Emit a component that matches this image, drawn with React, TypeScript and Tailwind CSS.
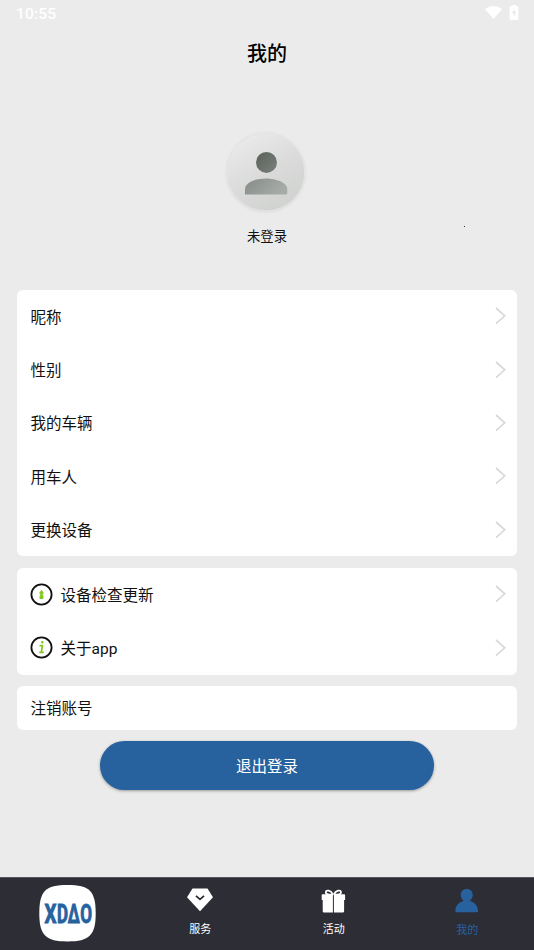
import React from 'react';

type RowProps = {
  label: string;
  icon?: React.ReactNode;
};

const profileRows = ['昵称', '性别', '我的车辆', '用车人', '更换设备'];

const logoLetters = [
  { char: 'X', x: 6.6, width: 12 },
  { char: 'D', x: 19, width: 11 },
  { char: 'Δ', x: 29.8, width: 12 },
  { char: 'O', x: 42.2, width: 11.8 },
];

function Chevron() {
  return (
    <svg className="h-[18px] w-[12px]" viewBox="0 0 12 18" fill="none" stroke="#d9d9d9" strokeWidth="1.7">
      <path d="M2 1 L10.8 8.8 L2 16.6" />
    </svg>
  );
}

function UpdateIcon() {
  return (
    <svg className="mr-2 -ml-px h-[23px] w-[23px]" viewBox="0 0 23 23" fill="none">
      <circle cx="11.5" cy="11.5" r="10.1" stroke="#111" strokeWidth="1.8" />
      <path d="M11.5 6.8 L14.2 10.6 H12.8 V12.4 H13.4 V16 H9.6 V12.4 H10.2 V10.6 H8.8 Z" fill="#86c91e" />
    </svg>
  );
}

function AboutIcon() {
  return (
    <svg className="mr-2 -ml-px h-[23px] w-[23px]" viewBox="0 0 23 23" fill="none">
      <circle cx="11.5" cy="11.5" r="10.1" stroke="#111" strokeWidth="1.8" />
      <circle cx="12.3" cy="6.2" r="1.2" fill="#86c91e" />
      <path d="M9.5 9.6 H12.4 L11.3 16.3 M9.2 16.3 H13.8" stroke="#86c91e" strokeWidth="1.7" />
    </svg>
  );
}

function Row({ label, icon }: RowProps) {
  return (
    <div className="flex h-[53.4px] items-center justify-between pr-[11px] pl-[13.5px]">
      <div className="flex items-center">
        {icon}
        <span className="pt-[3px]">{label}</span>
      </div>
      <Chevron />
    </div>
  );
}

function StatusBar() {
  return (
    <div className="flex h-[28px] items-center justify-between pr-[15px] pl-[16px] text-white">
      <span className="pt-[2px] font-[Roboto] text-[15.5px] leading-none font-medium tracking-[0.2px]">10:55</span>
      <div className="flex items-start gap-[7px] pb-[3px]">
        <svg className="mt-px h-[13px] w-[17px]" viewBox="0 0 17 13" fill="currentColor">
          <path d="M0 3 Q8.5 -3 17 3 L8.5 13 Z" />
        </svg>
        <svg className="h-[15px] w-[10px]" viewBox="0 0 10 15">
          <path d="M3 1 V0 H7 V1 H8 Q9.4 1 9.4 2.5 V13.5 Q9.4 15 8 15 H2 Q0.6 15 0.6 13.5 V2.5 Q0.6 1 2 1 Z" fill="currentColor" />
          <path d="M5.6 4 L3.2 8 H4.8 V11.4 L7 7.2 H5.6 Z" fill="#e4e4e4" />
        </svg>
      </div>
    </div>
  );
}

function Avatar() {
  return (
    <svg className="h-[88px] w-[88px]" viewBox="0 0 88 88">
      <defs>
        <linearGradient id="disc" x1="0.2" y1="0" x2="0.8" y2="1">
          <stop offset="0" stopColor="#ebebeb" />
          <stop offset="0.5" stopColor="#dadbda" />
          <stop offset="1" stopColor="#cfd1cf" />
        </linearGradient>
        <linearGradient id="head" x1="0" y1="0" x2="1" y2="1">
          <stop offset="0" stopColor="#59615b" />
          <stop offset="1" stopColor="#7b817c" />
        </linearGradient>
        <linearGradient id="body" x1="0" y1="0" x2="1" y2="0.4">
          <stop offset="0" stopColor="#858b86" />
          <stop offset="1" stopColor="#a6aba7" />
        </linearGradient>
        <filter id="soft" x="-10%" y="-10%" width="120%" height="120%">
          <feDropShadow dx="0" dy="0.5" stdDeviation="0.8" floodColor="#999" floodOpacity="0.3" />
        </filter>
      </defs>
      <circle cx="42.8" cy="44" r="39" fill="url(#disc)" stroke="#e5e5e5" strokeWidth="1" filter="url(#soft)" />
      <circle cx="43.5" cy="34.4" r="10.5" fill="url(#head)" />
      <path d="M22 66.5 V61 C22 54.5 33 50.4 43 50.4 C53 50.4 64.3 54.5 64.3 61 V65 Q64.3 66.5 63 66.5 Z" fill="url(#body)" />
    </svg>
  );
}

function Logo() {
  return (
    <svg className="h-[58px] w-[58px]" viewBox="0 0 58 58">
      <path
        d="M29.5 1 C51.5 1 57.7 7.2 57.7 29.2 C57.7 51.2 51.5 57.4 29.5 57.4 C7.5 57.4 1.3 51.2 1.3 29.2 C1.3 7.2 7.5 1 29.5 1 Z"
        fill="#fff"
      />
      <g
        transform="translate(0 38.5) scale(1 1.4)"
        className="font-[Roboto,sans-serif] text-[18.5px] font-bold"
        fill="#27629f"
        stroke="#27629f"
        strokeWidth="0.7"
      >
        {logoLetters.map(({ char, x, width }) => (
          <text key={char} x={x} y="0" textLength={width} lengthAdjust="spacingAndGlyphs">
            {char}
          </text>
        ))}
      </g>
    </svg>
  );
}

function BottomNav() {
  return (
    <nav className="grid h-[73px] grid-cols-4 border-t border-[#555560] bg-[#2d2d36] text-[11px] leading-[16px] text-white">
      <div className="flex justify-center pt-[6px]">
        <Logo />
      </div>
      <div className="flex flex-col items-center pt-[10px]">
        <svg className="h-[24px] w-[27px]" viewBox="0 0 27 24">
          <path d="M5.5 0.5 H20.5 L26 9.3 L13 23.3 L0 9.3 Z" fill="#fff" />
          <path d="M9 7.8 L13 11.4 L17 7.8" fill="none" stroke="#2d2d36" strokeWidth="1.8" />
        </svg>
        <span className="mt-[10px]">服务</span>
      </div>
      <div className="flex flex-col items-center pt-[11px]">
        <svg className="h-[24px] w-[25px]" viewBox="0 0 25 24">
          <path d="M12 5.5 C10 1 5 0.5 4.8 3.2 C4.7 5.5 8 5.6 12 5.6 M12.8 5.6 C14.8 1 19.8 0.5 20 3.2 C20.1 5.5 17 5.6 12.8 5.6" fill="none" stroke="#fff" strokeWidth="1.8" />
          <path d="M1.5 5.2 H11.9 V23.5 H3 Q1.7 23.5 1.7 22.2 V11 H0.7 V6 Q0.7 5.2 1.5 5.2 Z M12.9 5.2 H23.3 Q24.1 5.2 24.1 6 V11 H23.1 V22.2 Q23.1 23.5 21.8 23.5 H12.9 Z" fill="#fff" />
        </svg>
        <span className="mt-[9px]">活动</span>
      </div>
      <div className="flex flex-col items-center pt-[11px] text-[#27629f]">
        <svg className="h-[24px] w-[24px]" viewBox="0 0 24 24" fill="currentColor">
          <path d="M11.7 0 C8.2 0 5.7 2.4 5.7 5.8 C5.7 8.4 7 10.6 8.6 11.7 C4 13.2 0.4 17 0.4 21.5 V22.5 Q0.4 23.3 1.2 23.3 H22.2 Q23 23.3 23 22.5 V21.5 C23 17 19.4 13.2 14.8 11.7 C16.4 10.6 17.7 8.4 17.7 5.8 C17.7 2.4 15.2 0 11.7 0 Z" />
        </svg>
        <span className="mt-[10px]">我的</span>
      </div>
    </nav>
  );
}

export default function App() {
  return (
    <div className="flex h-[950px] w-[534px] flex-col overflow-hidden bg-[#ebebeb] font-[Roboto,'Noto_Sans_CJK_SC',sans-serif] text-[15.5px] leading-[22px] text-[#111]">
      <StatusBar />
      <h1 className="mt-[11px] text-center text-[20px] leading-[30px] font-medium text-black">我的</h1>

      <div className="mt-[59px] flex flex-col items-center">
        <Avatar />
        <span className="mt-[11px] text-[13.3px] leading-[20px]">未登录</span>
      </div>
      <div className="-mt-[21.5px] mb-[19.5px] ml-[464px] h-px w-px bg-[#43204f]" />

      <main className="mt-[43.5px] flex flex-1 flex-col gap-[11.3px] px-[17px]">
        <section className="rounded-[6px] bg-white">
          {profileRows.map((label) => (
            <Row key={label} label={label} />
          ))}
        </section>
        <section className="rounded-[6px] bg-white">
          <Row label="设备检查更新" icon={<UpdateIcon />} />
          <Row label="关于app" icon={<AboutIcon />} />
        </section>
        <section className="flex h-[44px] items-center rounded-[6px] bg-white pt-[3px] pl-[13.5px]">注销账号</section>
        <button className="h-[49px] w-[334px] self-center rounded-full bg-[#27629f] pt-[3px] text-white shadow-[0_1px_3px_rgba(0,0,0,0.35)]">
          退出登录
        </button>
      </main>

      <BottomNav />
    </div>
  );
}
